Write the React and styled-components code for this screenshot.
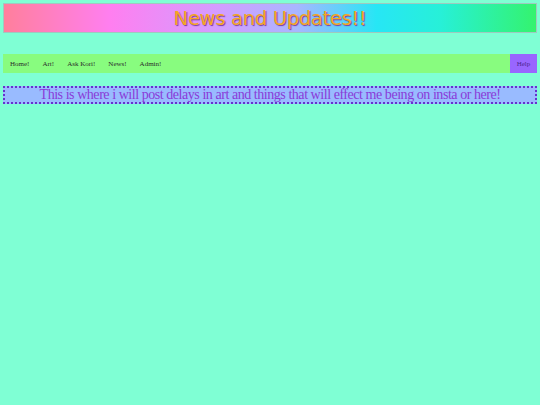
import React from "react";
import styled, { createGlobalStyle } from "styled-components";

const GlobalStyle = createGlobalStyle`
  body {
    margin: 0;
    background: #7fffd4;
    font-family: "Liberation Serif", "Times New Roman", serif;
  }
`;

const Page = styled.div`
  padding: 3px;
  display: flex;
  flex-direction: column;
`;

const Banner = styled.header`
  height: 30px;
  box-sizing: border-box;
  border: 1px solid #9fc9bf;
  background: linear-gradient(
    90deg,
    #ff7f9c 0%,
    #ff7ff0 20%,
    #d49cff 40%,
    #a9b6ff 55%,
    #27e6f5 70%,
    #27f0d8 82%,
    #34f36e 100%
  );
  display: flex;
  align-items: center;
  justify-content: center;
`;

const Title = styled.h1`
  margin: 0;
  font-family: "Comic Sans MS", "DejaVu Sans", sans-serif;
  font-weight: normal;
  font-size: 19.5px;
  color: #f5a623;
  text-shadow: 1px 1px 1px #7a3aa0;
  letter-spacing: -0.3px;
`;

const Nav = styled.nav`
  margin-top: 21px;
  height: 19px;
  background: #88fc7f;
  display: flex;
  align-items: stretch;
  padding-left: 7px;
`;

const NavLink = styled.a`
  font-size: 7px;
  color: #2a2a2a;
  display: flex;
  align-items: center;
  margin-right: 13px;
  text-decoration: none;
`;

const HelpLink = styled.a`
  margin-left: auto;
  width: 27px;
  background: #9966ff;
  color: #4a2590;
  font-size: 7px;
  display: flex;
  align-items: center;
  justify-content: center;
`;

const Notice = styled.div`
  margin-top: 13px;
  border: 2px dotted #6633cc;
  background: #99bbff;
  color: #8a3ad8;
  text-align: center;
  font-size: 14px;
  letter-spacing: -0.45px;
  line-height: 14px;
  height: 14px;
  white-space: nowrap;
`;

export default function App() {
  return (
    <>
      <GlobalStyle />
      <Page>
        <Banner>
          <Title>News and Updates!!</Title>
        </Banner>
        <Nav>
          <NavLink>Home!</NavLink>
          <NavLink>Art!</NavLink>
          <NavLink>Ask Kori!</NavLink>
          <NavLink>News!</NavLink>
          <NavLink>Admin!</NavLink>
          <HelpLink>Help</HelpLink>
        </Nav>
        <Notice>
          This is where i will post delays in art and things that will effect me being on insta or here!
        </Notice>
      </Page>
    </>
  );
}
